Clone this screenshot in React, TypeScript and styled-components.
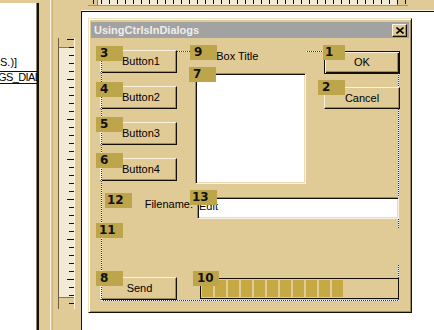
import React from 'react';
import styled, { createGlobalStyle } from 'styled-components';

const C = {
  face: '#e0ca96',
  light: '#faf1de',
  shadow: '#a38b5a',
  dark: '#141008',
  cream: '#f3ead6',
  badge: '#bda54c',
  seg: '#c6a943',
  title: '#a2a2a2',
};

const GlobalStyle = createGlobalStyle`
  html, body { margin: 0; padding: 0; }
  body {
    width: 434px;
    height: 330px;
    overflow: hidden;
    background: ${C.face};
    font-family: "Liberation Sans", Arial, sans-serif;
    font-size: 11px;
    color: #000;
  }
  * { box-sizing: border-box; }
`;

const Page = styled.div`
  display: flex;
  width: 434px;
  height: 330px;
  overflow: hidden;
  background: ${C.face};
`;

/* ---------- left source pane ---------- */
const SourcePane = styled.div`
  flex: none;
  width: 39px;
  margin-top: 3px;
  padding-top: 53px;
  background: #fff;
  border-right: 2px solid ${C.dark};
  box-shadow: inset -1px 0 0 #8a8070;
  overflow: hidden;
  display: flex;
  flex-direction: column;
  gap: 2px;
`;

const SourceLine = styled.div`
  line-height: 13px;
  white-space: nowrap;
`;

const InPlaceEdit = styled.div`
  height: 13px;
  width: 39px;
  margin-left: -1px;
  border: 1px solid ${C.dark};
  line-height: 11px;
  white-space: nowrap;
  overflow: hidden;
  text-indent: -2px;
  letter-spacing: -0.6px;
`;

const Splitter = styled.div`
  flex: none;
  width: 19px;
  background: linear-gradient(
    to right,
    ${C.face} 0 11px,
    ${C.light} 11px 12px,
    ${C.face} 12px 13px,
    #cdb27c 13px 14px,
    ${C.face} 14px
  );
`;

/* ---------- vertical ruler ---------- */
const RulerColumn = styled.div`
  flex: none;
  width: 17px;
  padding: 38px 0 21px;
  display: flex;
`;

const VRuler = styled.div`
  position: relative;
  flex: 1;
  display: flex;
  flex-direction: column;
  border-left: 1px solid #6d5e3e;
  border-right: 1px solid #fff6e4;
  background: ${C.cream};
`;

const RulerThumb = styled.div<{ $h: number; $edge: 'start' | 'end'; $dir: 'v' | 'h' }>`
  flex: none;
  ${(p) => (p.$dir === 'v' ? `height: ${p.$h}px;` : `width: ${p.$h}px;`)}
  background: ${C.face};
  ${(p) =>
    p.$dir === 'v'
      ? `border-${p.$edge === 'start' ? 'bottom' : 'top'}: 1px solid #8c7850;`
      : `border-${p.$edge === 'start' ? 'right' : 'left'}: 1px solid #8c7850;`}
`;

const RulerTrack = styled.div`
  flex: 1;
`;

const TickLayer = styled.svg`
  position: absolute;
  left: 0;
  top: 0;
  pointer-events: none;
`;

/* ---------- workspace ---------- */
const Workspace = styled.div`
  flex: 1;
  min-width: 0;
  margin-left: 6px;
  display: flex;
  flex-direction: column;
`;

const TopStrip = styled.div`
  flex: none;
  height: 11px;
  padding-left: 7px;
  box-shadow: inset 0 -1px 0 ${C.light};
`;

const HRuler = styled.div`
  position: relative;
  width: 320px;
  height: 6px;
  display: flex;
  background: ${C.cream};
  border-bottom: 1px solid #a99060;
`;

const Canvas = styled.div`
  flex: 1;
  background: #fff;
  border-top: 1px solid ${C.dark};
  border-left: 1px solid ${C.dark};
  padding: 6px 0 0 6px;
`;

/* ---------- dialog ---------- */
const Dialog = styled.div`
  width: 324px;
  height: 295px;
  display: flex;
  flex-direction: column;
  background: ${C.face};
  border: 1px solid;
  border-color: #efe3c5 ${C.dark} ${C.dark} #efe3c5;
  box-shadow: inset 1px 1px 0 #fff, inset -1px -1px 0 ${C.shadow};
  padding: 3px 2px 1px 2px;
`;

const TitleBar = styled.div`
  flex: none;
  height: 16px;
  background: ${C.title};
  display: flex;
  align-items: center;
  justify-content: space-between;
  padding: 0 2px 0 3px;
`;

const TitleText = styled.span`
  color: #eeeeee;
  font-weight: bold;
  font-size: 11px;
  line-height: 16px;
  white-space: nowrap;
`;

const CloseButton = styled.div`
  width: 15px;
  height: 13px;
  background: ${C.face};
  border: 1px solid;
  border-color: ${C.light} ${C.dark} ${C.dark} ${C.light};
  box-shadow: inset -1px -1px 0 ${C.shadow};
  display: flex;
  align-items: center;
  justify-content: center;
`;

const Body = styled.div`
  position: relative;
  z-index: 0;
  flex: 1;
  display: flex;
  flex-direction: column;
  align-items: flex-start;
  padding: 12px 0 0 9px;
`;

const TopRow = styled.div`
  display: flex;
  align-items: flex-start;
`;

const ButtonColumn = styled.div`
  display: flex;
  flex-direction: column;
  gap: 13px;
`;

const PushButton = styled.div<{ $h?: number; $w?: number; $default?: boolean; $shift?: number }>`
  width: ${(p) => p.$w ?? 77}px;
  height: ${(p) => p.$h ?? 23}px;
  display: flex;
  align-items: center;
  justify-content: center;
  padding-left: ${(p) => p.$shift ?? 0}px;
  background: ${C.face};
  white-space: nowrap;
  line-height: 13px;
  ${(p) =>
    p.$default
      ? `border: 1px solid ${C.dark};
         box-shadow: inset 1px 1px 0 ${C.light}, inset -1px -1px 0 ${C.dark}, inset -2px -2px 0 ${C.shadow};`
      : `border: 1px solid;
         border-color: ${C.light} ${C.dark} ${C.dark} ${C.light};
         box-shadow: inset -1px -1px 0 ${C.shadow};`}
`;

const MidColumn = styled.div`
  margin-left: 18px;
  width: 111px;
  display: flex;
  flex-direction: column;
`;

const ListTitle = styled.div`
  height: 13px;
  line-height: 13px;
  margin-left: -5px;
  width: 116px;
  padding-left: 6px;
  background: ${C.face};
  white-space: nowrap;
`;

const ListBox = styled.div`
  margin-top: 10px;
  width: 111px;
  height: 111px;
  background: #fff;
  border: 1px solid;
  border-color: ${C.shadow} ${C.light} ${C.light} ${C.shadow};
  box-shadow: inset 1px 1px 0 ${C.dark}, inset -1px -1px 0 #eadcb6;
`;

const RightColumn = styled.div`
  margin-left: 18px;
  margin-top: 1px;
  display: flex;
  flex-direction: column;
  gap: 13px;
`;

const FileRow = styled.div`
  margin-top: 13px;
  display: flex;
  align-items: flex-start;
`;

const FileLabel = styled.div`
  width: 93px;
  margin-top: 1px;
  line-height: 13px;
  text-align: right;
  white-space: nowrap;
`;

const EditBox = styled.div`
  margin-left: 4px;
  width: 202px;
  height: 22px;
  background: #fff;
  border: 1px solid;
  border-color: ${C.shadow} ${C.light} ${C.light} ${C.shadow};
  box-shadow: inset 1px 1px 0 ${C.dark}, inset -1px -1px 0 #eadcb6;
  padding: 2px 0 0 1px;
  line-height: 13px;
`;

const StaticArea = styled.div`
  margin-top: 9px;
  margin-left: 1px;
  width: 298px;
  height: 37px;
  background: ${C.face};
`;

const BottomRow = styled.div`
  margin-top: 12px;
  display: flex;
  align-items: flex-start;
`;

const Progress = styled.div`
  margin-left: 23px;
  margin-top: 1px;
  width: 199px;
  height: 21px;
  border: 1px solid ${C.dark};
  padding: 1px;
  display: flex;
  gap: 2px;
`;

const Segment = styled.div`
  width: 11px;
  height: 100%;
  background: ${C.seg};
`;

const Guide = styled.div<{ $side: 'top' | 'bottom' | 'left' | 'right'; $front?: boolean }>`
  position: absolute;
  z-index: ${(p) => (p.$front ? 1 : -1)};
  ${(p) =>
    p.$side === 'top' || p.$side === 'bottom'
      ? `left: 10px; width: 298px; height: 1px; top: ${p.$side === 'top' ? 13 : 262}px;
         background: repeating-linear-gradient(to right, #2d2d8a 0 1px, #ffffff 1px 2px);`
      : `top: 13px; height: 250px; width: 1px; left: ${p.$side === 'left' ? 10 : 307}px;
         background: repeating-linear-gradient(to bottom, #2d2d8a 0 1px, #ffffff 1px 2px);`}
`;

const Badge = styled.div<{ $x: number; $y: number; $w?: number; $pad?: number }>`
  position: absolute;
  z-index: 2;
  left: ${(p) => p.$x}px;
  top: ${(p) => p.$y}px;
  width: ${(p) => p.$w ?? 27}px;
  height: 15px;
  padding-left: ${(p) => p.$pad ?? 4}px;
  background: ${C.badge};
  color: #111;
  font-family: "DejaVu Sans", Verdana, sans-serif;
  font-weight: bold;
  font-size: 12px;
  line-height: 15px;
`;

const badges: { n: string; x: number; y: number; w?: number; pad?: number }[] = [
  { n: '1', x: 232, y: 7, w: 22, pad: 2 },
  { n: '2', x: 227, y: 42 },
  { n: '3', x: 5, y: 8 },
  { n: '4', x: 5, y: 44 },
  { n: '5', x: 5, y: 79 },
  { n: '6', x: 5, y: 115 },
  { n: '7', x: 98, y: 29 },
  { n: '8', x: 5, y: 233 },
  { n: '9', x: 99, y: 7 },
  { n: '10', x: 102, y: 233, w: 26 },
  { n: '11', x: 5, y: 185, pad: 3 },
  { n: '12', x: 14, y: 155, pad: 2 },
  { n: '13', x: 99, y: 152, pad: 2 },
];

const vTicks = Array.from({ length: 34 }, (_, k) => ({ y: 1 + 8 * k, long: k % 5 === 0 }));
const hTicks = Array.from({ length: 40 }, (_, k) => 5 + 8 * k);

export default function App() {
  return (
    <>
      <GlobalStyle />
      <Page>
        <SourcePane>
          <SourceLine>S.)]</SourceLine>
          <InPlaceEdit>GS_DIALOG</InPlaceEdit>
        </SourcePane>
        <Splitter />
        <RulerColumn>
          <VRuler>
            <RulerThumb $dir="v" $h={10} $edge="start" />
            <RulerTrack />
            <RulerThumb $dir="v" $h={12} $edge="end" />
            <TickLayer width="16" height="271">
              {vTicks.map((t) => (
                <line
                  key={t.y}
                  x1={t.long ? 8 : 10}
                  x2={15}
                  y1={t.y + 0.5}
                  y2={t.y + 0.5}
                  stroke="#111"
                  strokeWidth="1"
                />
              ))}
            </TickLayer>
          </VRuler>
        </RulerColumn>
        <Workspace>
          <TopStrip>
            <HRuler>
              <RulerThumb $dir="h" $h={10} $edge="start" />
              <RulerTrack />
              <RulerThumb $dir="h" $h={11} $edge="end" />
              <TickLayer width="320" height="6">
                {hTicks.map((x) => (
                  <line key={x} x1={x + 0.5} x2={x + 0.5} y1={0} y2={4} stroke="#111" strokeWidth="1" />
                ))}
              </TickLayer>
            </HRuler>
          </TopStrip>
          <Canvas>
            <Dialog>
              <TitleBar>
                <TitleText>UsingCtrlsInDialogs</TitleText>
                <CloseButton>
                  <svg width="8" height="7" viewBox="0 0 8 7">
                    <path d="M0.5 0.5 L7.5 6.5 M7.5 0.5 L0.5 6.5" stroke="#000" strokeWidth="1.6" />
                  </svg>
                </CloseButton>
              </TitleBar>
              <Body>
                <Guide $side="top" />
                <Guide $side="right" />
                <Guide $side="bottom" />
                <Guide $side="left" $front />
                <TopRow>
                  <ButtonColumn>
                    <PushButton $shift={5}>Button1</PushButton>
                    <PushButton $shift={5}>Button2</PushButton>
                    <PushButton $shift={5}>Button3</PushButton>
                    <PushButton $shift={5}>Button4</PushButton>
                  </ButtonColumn>
                  <MidColumn>
                    <ListTitle>List Box Title</ListTitle>
                    <ListBox />
                  </MidColumn>
                  <RightColumn>
                    <PushButton $default $w={76} $h={23}>OK</PushButton>
                    <PushButton $w={76} $h={22}>Cancel</PushButton>
                  </RightColumn>
                </TopRow>
                <FileRow>
                  <FileLabel>Filename:</FileLabel>
                  <EditBox>Edit</EditBox>
                </FileRow>
                <StaticArea />
                <BottomRow>
                  <PushButton $shift={2}>Send</PushButton>
                  <Progress>
                    {Array.from({ length: 11 }, (_, i) => (
                      <Segment key={i} />
                    ))}
                  </Progress>
                </BottomRow>
                {badges.map((b) => (
                  <Badge key={b.n} $x={b.x} $y={b.y} $w={b.w} $pad={b.pad}>
                    {b.n}
                  </Badge>
                ))}
              </Body>
            </Dialog>
          </Canvas>
        </Workspace>
      </Page>
    </>
  );
}
